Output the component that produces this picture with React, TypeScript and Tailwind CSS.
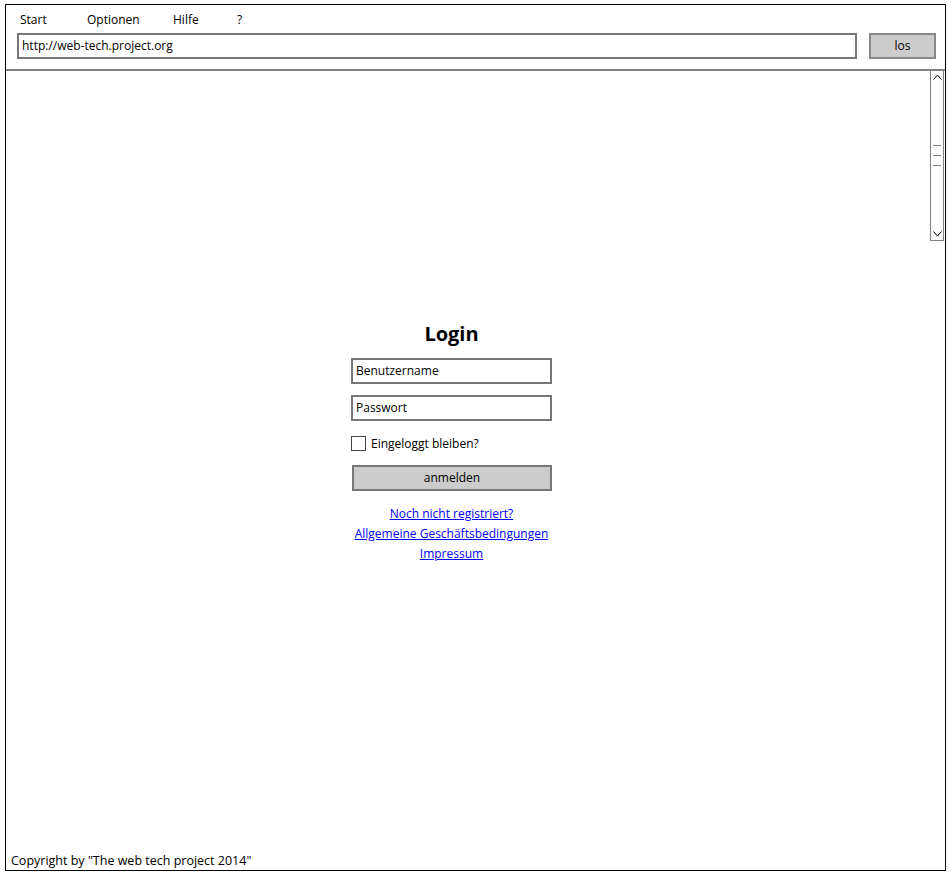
import React from "react";

const font = { fontFamily: '"Comic Sans MS", "Open Sans", "DejaVu Sans", sans-serif' };

function ScrollBar() {
  return (
    <div className="relative mr-px -mt-[1px] h-[171px] w-[14px] shrink-0 border border-[#808080] bg-white">
      <svg className="absolute left-[2px] top-[3px]" width="9" height="6" viewBox="0 0 9 6">
        <path d="M0.5 5.5 L4.5 1 L8.5 5.5" fill="none" stroke="#000" strokeWidth="1" />
      </svg>
      <div className="absolute left-[2px] top-[74px] flex w-[8px] flex-col gap-[9px]">
        <div className="h-px bg-[#808080]" />
        <div className="h-px bg-[#808080]" />
        <div className="h-px bg-[#808080]" />
      </div>
      <svg className="absolute bottom-[3px] left-[2px]" width="9" height="6" viewBox="0 0 9 6">
        <path d="M0.5 0.5 L4.5 5 L8.5 0.5" fill="none" stroke="#000" strokeWidth="1" />
      </svg>
    </div>
  );
}

export default function App() {
  return (
    <div className="h-[876px] w-[949px] overflow-hidden bg-white text-black" style={font}>
      <div className="ml-[5px] mt-[4px] flex h-[867px] w-[941px] flex-col border border-black">
        {/* browser chrome */}
        <div className="h-[66px] shrink-0 border-b-2 border-[#808080]">
          <div className="flex h-[18px] pl-[14px] pt-[6px] text-[12px] leading-[18px]">
            <span className="w-[67px]">Start</span>
            <span className="w-[86px]">Optionen</span>
            <span className="w-[64px]">Hilfe</span>
            <span>?</span>
          </div>
          <div className="ml-[11px] mt-[10px] flex items-center gap-[12px]">
            <div className="flex h-[26px] w-[840px] items-center border-2 border-[#777] px-[3px] text-[12px]">
              http://web-tech.project.org
            </div>
            <div className="flex h-[26px] w-[67px] items-center justify-center border-2 border-[#888] bg-[#cccccc] text-[12px]">
              los
            </div>
          </div>
        </div>

        {/* page body */}
        <div className="flex flex-1">
          <div className="flex-1">
            <div className="ml-[345px] mt-[249px] flex w-[201px] flex-col">
              <h1 className="h-[28px] text-center text-[20px] font-bold leading-[28px]">Login</h1>
              <div className="mt-[10px] flex h-[26px] items-center border-2 border-[#777] px-[3px] text-[12px]">
                Benutzername
              </div>
              <div className="mt-[11px] flex h-[26px] items-center border-2 border-[#777] px-[3px] text-[12px]">
                Passwort
              </div>
              <label className="mt-[15px] flex h-[15px] items-center gap-[5px] text-[12px]">
                <span className="h-[15px] w-[15px] border border-[#444]" />
                Eingeloggt bleiben?
              </label>
              <div className="ml-px mt-[14px] flex h-[26px] w-[200px] items-center justify-center border-2 border-[#777] bg-[#cccccc] text-[12px]">
                anmelden
              </div>
              <div className="mt-[13px] flex flex-col items-center text-[12px] leading-[20px] text-[#0000ff]">
                <a href="#" className="underline">Noch nicht registriert?</a>
                <a href="#" className="underline">Allgemeine Geschäftsbedingungen</a>
                <a href="#" className="underline">Impressum</a>
              </div>
            </div>
          </div>
          <ScrollBar />
        </div>

        <div className="h-[17px] shrink-0 px-[5px] text-[12.5px] leading-[16px]">
          Copyright by "The web tech project 2014"
        </div>
      </div>
    </div>
  );
}
